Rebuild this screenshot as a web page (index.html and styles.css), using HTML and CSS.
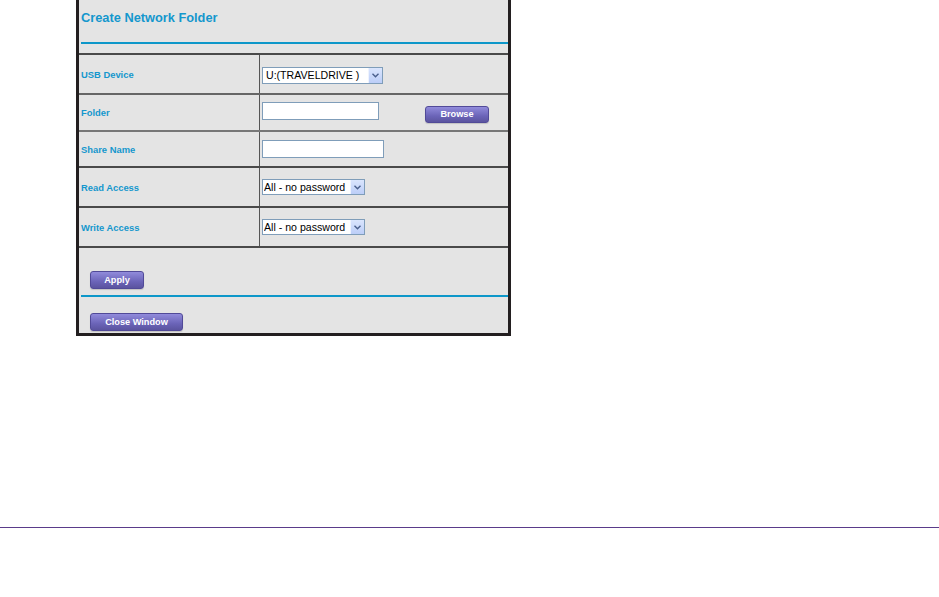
FILE: index.html
```html
<!DOCTYPE html>
<html lang="en">
<head>
    <meta charset="UTF-8">
    <title>Create Network Folder</title>
    <link rel="stylesheet" href="styles.css">
</head>
<body>
    <div class="frame">
        <div class="header">
            <h1>Create Network Folder</h1>
        </div>
        <div class="rule"></div>

        <div class="form-table">
            <div class="row row-usb">
                <div class="label">USB Device</div>
                <div class="value">
                    <span class="select-wrap select-usb">
                        <select>
                            <option>U:(TRAVELDRIVE )</option>
                        </select>
                        <span class="arrow"><svg width="7" height="5" viewBox="0 0 7 5"><path d="M0.5 0.8 L3.5 3.8 L6.5 0.8" fill="none" stroke="#4a5f8c" stroke-width="1.4"/></svg></span>
                    </span>
                </div>
            </div>
            <div class="row row-folder">
                <div class="label">Folder</div>
                <div class="value">
                    <input type="text" class="text-folder">
                    <button class="btn btn-browse">Browse</button>
                </div>
            </div>
            <div class="row row-share">
                <div class="label">Share Name</div>
                <div class="value">
                    <input type="text" class="text-share">
                </div>
            </div>
            <div class="row">
                <div class="label">Read Access</div>
                <div class="value">
                    <span class="select-wrap select-access">
                        <select>
                            <option>All - no password</option>
                        </select>
                        <span class="arrow"><svg width="7" height="5" viewBox="0 0 7 5"><path d="M0.5 0.8 L3.5 3.8 L6.5 0.8" fill="none" stroke="#4a5f8c" stroke-width="1.4"/></svg></span>
                    </span>
                </div>
            </div>
            <div class="row">
                <div class="label">Write Access</div>
                <div class="value">
                    <span class="select-wrap select-access">
                        <select>
                            <option>All - no password</option>
                        </select>
                        <span class="arrow"><svg width="7" height="5" viewBox="0 0 7 5"><path d="M0.5 0.8 L3.5 3.8 L6.5 0.8" fill="none" stroke="#4a5f8c" stroke-width="1.4"/></svg></span>
                    </span>
                </div>
            </div>
        </div>

        <div class="actions">
            <button class="btn btn-apply">Apply</button>
        </div>
        <div class="rule rule-bottom"></div>
        <div class="actions actions-close">
            <button class="btn btn-close">Close Window</button>
        </div>
    </div>

    <div class="page-rule"></div>
</body>
</html>
```

FILE: styles.css
```css
body {
    margin: 0;
    background: #fff;
    font-family: "Liberation Sans", Arial, sans-serif;
}
.frame {
    width: 429px;
    margin-left: 76px;
    background: #e4e4e4;
    border: 3px solid #231f20;
    border-top: none;
    padding-bottom: 4px;
}
.header {
    height: 42px;
    padding: 10px 0 0 2px;
    box-sizing: border-box;
}
h1 {
    margin: 0;
    font-size: 12.8px;
    line-height: 16px;
    font-weight: bold;
    color: #1497cd;
}
.rule {
    height: 2px;
    margin-left: 2px;
    background: #0d97c9;
}
.form-table {
    margin-top: 9px;
    border-bottom: 2px solid #4a4a4a;
}
.row {
    display: flex;
    height: 40px;
    border-top: 2px solid #4a4a4a;
    box-sizing: border-box;
}
.row-folder {
    height: 37px;
    border-top-color: #666;
}
.row-share {
    height: 36px;
    border-top-color: #777;
}
.label {
    width: 178px;
    padding-left: 2px;
    border-right: 1px solid #555;
    display: flex;
    align-items: center;
    font-size: 9.4px;
    font-weight: bold;
    color: #1497cd;
}
.value {
    flex: 1;
    display: flex;
    align-items: center;
    padding-left: 2px;
}
.row-usb .value {
    padding-top: 2px;
}
input[type="text"] {
    height: 18px;
    margin: 0;
    padding: 0 2px;
    border: 1px solid #7f9db9;
    background: #fff;
    box-sizing: border-box;
}
.text-folder {
    width: 117px;
    margin-top: -4px !important;
}
.text-share {
    width: 122px;
    margin-top: -1px !important;
}
.select-wrap {
    position: relative;
    display: inline-block;
}
.select-wrap select {
    appearance: none;
    -webkit-appearance: none;
    display: block;
    margin: 0;
    padding: 0 15px 0 1px;
    border: 1px solid #7f9db9;
    border-radius: 0;
    background: #fff;
    color: #000;
    font-family: "Liberation Sans", Arial, sans-serif;
    font-size: 10.6px;
    line-height: 15px;
    height: 17px;
    box-sizing: border-box;
}
.select-usb select {
    width: 121px;
    padding-left: 3px;
}
.select-access select {
    width: 103px;
    height: 16px;
    line-height: 14px;
}
.select-wrap .arrow {
    position: absolute;
    top: 1px;
    right: 1px;
    bottom: 1px;
    width: 13px;
    background: linear-gradient(#dae5fd, #bccef8);
    border-left: 1px solid #eef3fe;
    display: flex;
    align-items: center;
    justify-content: center;
    pointer-events: none;
}
.btn {
    margin: 0;
    padding: 0;
    border: 1px solid #514a98;
    border-radius: 3px;
    background: linear-gradient(#918bdb, #6b64b8 60%, #5b549f);
    color: #fff;
    font-family: "Liberation Sans", Arial, sans-serif;
    font-size: 9.2px;
    font-weight: bold;
    box-shadow: 0 1px 1px rgba(0, 0, 0, 0.15);
    cursor: pointer;
}
.btn-browse {
    width: 64px;
    height: 17px;
    margin-left: 46px;
    margin-top: 3px;
}
.actions {
    padding-left: 11px;
    margin-top: 21px;
    height: 18px;
}
.btn-apply {
    width: 54px;
    height: 18px;
}
.rule-bottom {
    margin-top: 8px;
}
.actions-close {
    margin-top: 14px;
}
.btn-close {
    width: 93px;
    height: 18px;
}
.page-rule {
    margin-top: 191px;
    height: 1px;
    background: #5a3b8a;
}
```
